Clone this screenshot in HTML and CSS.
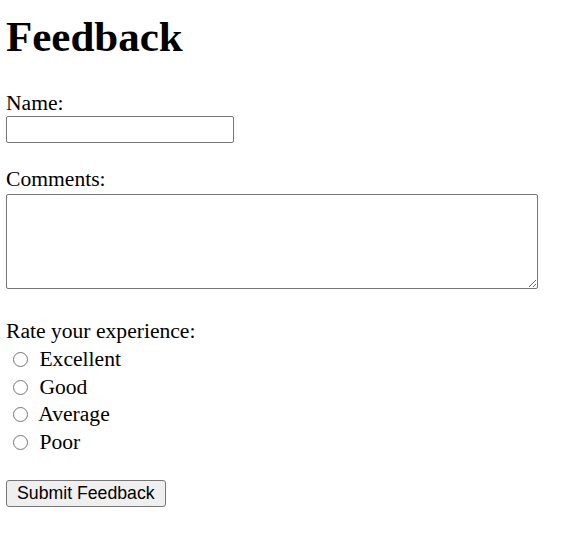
FILE: index.html
```html
<!DOCTYPE html>
<html lang="en">
<head>
  <meta charset="UTF-8">
  <title>Feedback</title>
  <link rel="stylesheet" href="styles.css">
</head>
<body>
<h1 class="title">Feedback</h1>
<form class="feedback">
  <div class="field">
    <label class="label" for="name">Name:</label>
    <input class="text-input" type="text" id="name" name="name">
  </div>
  <div class="field field-comments">
    <label class="label" for="comments">Comments:</label>
    <textarea class="text-area" id="comments" name="comments"></textarea>
  </div>
  <div class="field field-rating">
    <span class="label">Rate your experience:</span>
    <div class="options">
      <label class="option"><input class="radio" type="radio" name="rating" value="excellent"> Excellent</label>
      <label class="option"><input class="radio" type="radio" name="rating" value="good"> Good</label>
      <label class="option"><input class="radio" type="radio" name="rating" value="average"> Average</label>
      <label class="option"><input class="radio" type="radio" name="rating" value="poor"> Poor</label>
    </div>
  </div>
  <button class="submit" type="submit">Submit Feedback</button>
</form>
</body>
</html>
```

FILE: styles.css
```css
* {
  box-sizing: border-box;
}

body {
  margin: 0 6px;
  font-family: "Liberation Serif", "Times New Roman", serif;
  font-size: 21.6px;
  color: #000;
  background: #fff;
}

.title {
  margin: 12px 0 29px;
  font-size: 43px;
  line-height: 50px;
  font-weight: bold;
}

.label {
  display: block;
  line-height: 24px;
}

.field {
  margin-bottom: 24px;
}

.text-input {
  display: block;
  width: 228px;
  height: 27px;
  margin-top: 1px;
  border: 1px solid #767676;
  border-radius: 2px;
  font-size: 17px;
}

.field-comments {
  margin-bottom: 30px;
}

.text-area {
  display: block;
  width: 532px;
  height: 95px;
  margin: 3px 0 0;
  border: 1px solid #767676;
  border-radius: 2px;
}

.field-rating {
  margin-bottom: 24px;
}

.options {
  padding-top: 3px;
}

.option {
  display: block;
  line-height: 27.5px;
}

.radio {
  width: 15px;
  height: 15px;
  margin: 0 6px 0 7px;
  vertical-align: -1px;
}

.submit {
  display: block;
  height: 27px;
  padding: 0 10px;
  font-family: "Liberation Sans", Arial, sans-serif;
  font-size: 17.7px;
  color: #000;
  background: #efefef;
  border: 1px solid #767676;
  border-radius: 3px;
}
```
